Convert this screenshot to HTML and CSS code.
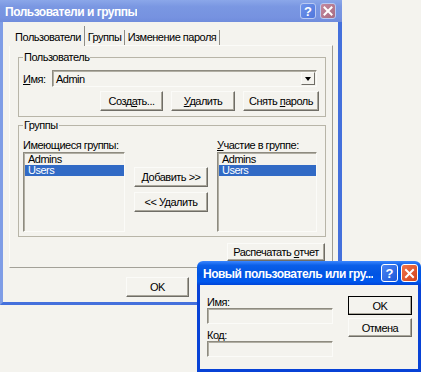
FILE: index.html
```html
<!DOCTYPE html>
<html lang="ru">
<head>
  <meta charset="UTF-8">
  <meta name="viewport" content="width=device-width, initial-scale=1.0">
  <title>Пользователи и группы</title>
  <link rel="stylesheet" href="styles.css">
</head>
<body>
  <div class="window main-win">
    <div class="titlebar inactive">
      <span class="title">Пользователи и группы</span>
      <span class="caption-btns">
        <span class="cap-btn help">?</span>
        <span class="cap-btn close">
          <svg width="10" height="10" viewBox="0 0 10 10"><path d="M1.5 1.5 L8.5 8.5 M8.5 1.5 L1.5 8.5" stroke="#fff" stroke-width="2" stroke-linecap="square"/></svg>
        </span>
      </span>
    </div>
    <div class="frame">
      <div class="tabs">
        <div class="tab active">Пользователи</div>
        <div class="tab tab-groups">Группы</div>
        <div class="tab tab-password">Изменение пароля</div>
      </div>
      <div class="tab-panel">
        <fieldset class="groupbox user-box">
          <legend>Пользователь</legend>
          <div class="name-row">
            <label class="name-label"><u>И</u>мя:</label>
            <div class="combo">
              <span class="combo-text">Admin</span>
              <span class="combo-btn"><span class="arrow"></span></span>
            </div>
          </div>
          <div class="btn-row">
            <button class="btn btn-create">Созд<u>а</u>ть...</button>
            <button class="btn btn-delete"><u>У</u>далить</button>
            <button class="btn btn-reset">Снять <u>п</u>ароль</button>
          </div>
        </fieldset>
        <fieldset class="groupbox groups-box">
          <legend>Группы</legend>
          <div class="groups-grid">
            <div class="list-label">Имеющиеся группы:</div>
            <div></div>
            <div class="list-label"><u>У</u>частие в группе:</div>
            <ul class="listbox">
              <li>Admins</li>
              <li class="selected">Users</li>
            </ul>
            <div class="move-btns">
              <button class="btn btn-move"><u>Д</u>обавить &gt;&gt;</button>
              <button class="btn btn-move">&lt;&lt; Удалить</button>
            </div>
            <ul class="listbox">
              <li>Admins</li>
              <li class="selected">Users</li>
            </ul>
          </div>
        </fieldset>
        <div class="print-row">
          <button class="btn btn-print">Распечатать <u>о</u>тчет</button>
        </div>
      </div>
      <div class="footer">
        <button class="btn btn-ok">OK</button>
        <button class="btn btn-ok">Отмена</button>
      </div>
    </div>
  </div>

  <div class="window dialog">
    <div class="titlebar active">
      <span class="title">Новый пользователь или гру...</span>
      <span class="caption-btns">
        <span class="cap-btn help">?</span>
        <span class="cap-btn close">
          <svg width="11" height="11" viewBox="0 0 11 11"><path d="M2 2 L9 9 M9 2 L2 9" stroke="#fff" stroke-width="2" stroke-linecap="square"/></svg>
        </span>
      </span>
    </div>
    <div class="dialog-body">
      <div class="fields">
        <div class="field-label">Имя:</div>
        <div class="textbox"></div>
        <div class="field-label">Код:</div>
        <div class="textbox"></div>
      </div>
      <div class="dialog-btns">
        <button class="btn btn-default">OK</button>
        <button class="btn">Отмена</button>
      </div>
    </div>
  </div>
</body>
</html>
```

FILE: styles.css
```css
body {
  margin: 0;
  width: 421px;
  height: 372px;
  overflow: hidden;
  position: relative;
  background: #f4f3ee;
  font-family: "Liberation Sans", Arial, sans-serif;
  font-size: 11px;
  letter-spacing: -0.5px;
  color: #000;
}
.window {
  background: #f4f3ee;
  display: flex;
  flex-direction: column;
}
.main-win {
  width: 342px;
  height: 305px;
}
.titlebar {
  display: flex;
  align-items: center;
  justify-content: space-between;
  flex-shrink: 0;
  color: #fff;
  font-weight: bold;
}
.titlebar.inactive {
  height: 22px;
  padding: 0 6px 0 5px;
  background: linear-gradient(#8ba7e9, #7a97e2 30%, #7692e0 80%, #6f8cdc);
}
.titlebar.active {
  height: 24px;
  padding: 0 3px 0 6px;
  border-radius: 6px 6px 0 0;
  background: linear-gradient(#3a86ff, #0b5fe8 18%, #0054e3 55%, #0058ee 85%, #0045d8);
}
.title {
  font-size: 12px;
  letter-spacing: -0.5px;
  padding-top: 2px;
  white-space: nowrap;
  overflow: hidden;
}
.caption-btns {
  display: flex;
  gap: 4px;
  flex-shrink: 0;
}
.cap-btn {
  width: 16px;
  height: 16px;
  box-sizing: border-box;
  border: 1px solid #fff;
  border-radius: 3px;
  display: flex;
  align-items: center;
  justify-content: center;
  font-size: 13px;
  font-weight: bold;
  letter-spacing: 0;
  color: #fff;
}
.inactive .cap-btn {
  border-color: #b9c9f2;
}
.inactive .help {
  background: linear-gradient(135deg, #6f93ea, #4f76dc);
}
.inactive .close {
  background: linear-gradient(135deg, #c4899e, #a86c82);
}
.active .caption-btns {
  gap: 3px;
}
.active .cap-btn {
  width: 17px;
  height: 18px;
}
.active .help {
  background: linear-gradient(135deg, #4c86f4, #1c57d8);
}
.active .close {
  background: linear-gradient(135deg, #f0744c, #d2431c);
}
.frame {
  flex: 1;
  border-style: solid;
  border-width: 0 4px 3px 3px;
  border-color: #4a74dc #4470dc #4470dc #7f9de6;
  padding: 4px 0 0 6px;
}
.tabs {
  display: flex;
  align-items: flex-end;
  height: 19px;
}
.tab {
  height: 15px;
  line-height: 14px;
  box-sizing: border-box;
  text-align: center;
  border-right: 1px solid #8f8d86;
}
.tab.active {
  width: 76px;
  height: 20px;
  margin-bottom: -1px;
  padding: 4px 0 0 3px;
  position: relative;
  z-index: 1;
  background: #f4f3ee;
}
.tab-groups {
  width: 40px;
}
.tab-password {
  width: 95px;
}
.tab-panel {
  width: 324px;
  height: 223px;
  box-sizing: border-box;
  border: 1px solid;
  border-color: #fbfbf8 #9d9b92 #a3a198 #fbfbf8;
  padding: 5px 0 0 8px;
}
.groupbox {
  width: 308px;
  box-sizing: border-box;
  margin: 0;
  border: 1px solid #b8b5a8;
  padding: 0 6px 5px 4px;
}
.groupbox legend {
  padding: 0 1px;
  line-height: 13px;
}
.groups-box {
  margin-top: 2px;
  padding-bottom: 4px;
}
.name-row {
  display: flex;
  align-items: center;
  margin-top: 6px;
}
.name-label {
  width: 29px;
}
.combo {
  width: 265px;
  height: 17px;
  box-sizing: border-box;
  display: flex;
  justify-content: space-between;
  align-items: center;
  border: 1px solid;
  border-color: #8e8b80 #fbfbf8 #fbfbf8 #8e8b80;
  box-shadow: inset 1px 1px #b1aea3;
  padding: 1px 1px 1px 3px;
}
.combo-btn {
  width: 14px;
  height: 13px;
  box-sizing: border-box;
  border: 1px solid;
  border-color: #fbfbf8 #6f6d66 #6f6d66 #fbfbf8;
  display: flex;
  align-items: center;
  justify-content: center;
}
.arrow {
  border-left: 3px solid transparent;
  border-right: 3px solid transparent;
  border-top: 4px solid #000;
}
.btn-row {
  display: flex;
  justify-content: flex-end;
  gap: 8px;
  margin-top: 4px;
}
.btn {
  font: inherit;
  letter-spacing: inherit;
  color: #000;
  background: #f4f3ee;
  height: 20px;
  padding: 0;
  box-sizing: border-box;
  border: 1px solid;
  border-color: #fbfbf8 #6f6d66 #6f6d66 #fbfbf8;
  box-shadow: inset -1px -1px #a9a69b;
  white-space: nowrap;
}
.btn-create {
  width: 63px;
}
.btn-delete {
  width: 64px;
}
.btn-reset {
  width: 76px;
}
.groups-grid {
  display: grid;
  grid-template-columns: 102px 74px 100px;
  grid-template-rows: 13px 80px;
  column-gap: 9px;
  margin-top: 7px;
}
.list-label {
  line-height: 13px;
  white-space: nowrap;
}
.listbox {
  list-style: none;
  margin: 0;
  padding: 1px 0 0 1px;
  box-sizing: border-box;
  border: 1px solid;
  border-color: #8e8b80 #fbfbf8 #fbfbf8 #8e8b80;
  box-shadow: inset 1px 1px #b1aea3;
}
.listbox li {
  line-height: 11px;
  padding-left: 3px;
}
.listbox .selected {
  background: #316ac5;
  color: #fff;
}
.move-btns {
  display: flex;
  flex-direction: column;
  gap: 5px;
  padding-top: 15px;
}
.print-row {
  display: flex;
  justify-content: flex-end;
  margin: 6px 7px 0 0;
}
.btn-print {
  width: 98px;
  height: 18px;
}
.footer {
  display: flex;
  gap: 8px;
  margin: 9px 0 0 117px;
}
.btn-ok {
  width: 63px;
}
.dialog {
  position: absolute;
  left: 197px;
  top: 261px;
  width: 224px;
  height: 111px;
}
.dialog-body {
  flex: 1;
  display: flex;
  gap: 15px;
  border-style: solid;
  border-width: 0 3px 3px 3px;
  border-color: #0842d6;
  padding: 0 6px 0 7px;
}
.fields {
  width: 126px;
  padding-top: 11px;
}
.field-label {
  line-height: 12px;
}
.textbox {
  height: 16px;
  box-sizing: border-box;
  margin-bottom: 5px;
  border: 1px solid;
  border-color: #8e8b80 #fbfbf8 #fbfbf8 #8e8b80;
  box-shadow: inset 1px 1px #b1aea3;
}
.dialog-btns {
  width: 64px;
  display: flex;
  flex-direction: column;
  gap: 3px;
  padding-top: 11px;
}
.dialog-btns .btn {
  height: 19px;
}
.btn-default {
  outline: 1px solid #000;
  outline-offset: -1px;
}
```
